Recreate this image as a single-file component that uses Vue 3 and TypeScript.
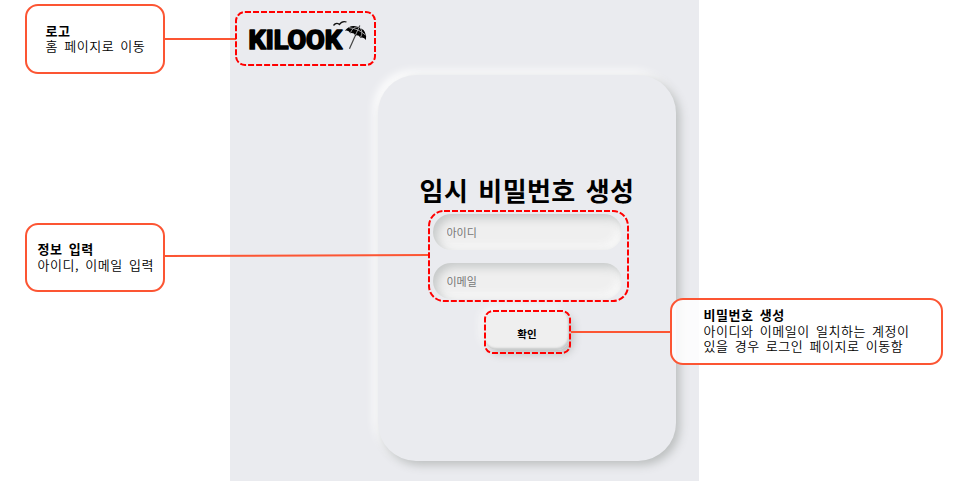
<script setup lang="ts">
interface Callout {
  name: string
  title: string
  lines: string[]
}

const callouts: Callout[] = [
  { name: 'home', title: '로고', lines: ['홈 페이지로 이동'] },
  { name: 'info', title: '정보 입력', lines: ['아이디, 이메일 입력'] },
  {
    name: 'create',
    title: '비밀번호 생성',
    lines: ['아이디와 이메일이 일치하는 계정이', '있을 경우 로그인 페이지로 이동함'],
  },
]
</script>

<template>
  <main class="board">
    <section class="screen">
      <header class="brand">
        <svg class="logo" width="120" height="34" viewBox="0 0 120 34">
          <text class="word" x="0.500" y="28.700" textLength="93.500" lengthAdjust="spacingAndGlyphs">KILOOK</text>
          <path class="bird" d="M85.500 5.500 Q88 2 91.500 4.500 Q94 0.500 98.500 2" />
          <g transform="translate(110 9.500) rotate(24)">
            <path class="pole" d="M0 -4.500 V21" />
            <path d="M-11.500 6.500 Q-9.500 -2.500 0 -2.500 Q9.500 -2.500 11.500 6.500 Q8.500 4 5.500 6.500 Q2.700 4.300 0 6.500 Q-2.700 4.300 -5.500 6.500 Q-8.500 4 -11.500 6.500Z" />
            <path class="rib" d="M-1 -2.500 Q-6 0 -5.500 6 M1 -2.500 Q6 0 5.500 6 M0 -2.500 V6 M-9 2 Q0 -1 9 2" />
          </g>
        </svg>
      </header>
      <form class="card" @submit.prevent>
        <h1>임시 비밀번호 생성</h1>
        <input type="text" placeholder="아이디" />
        <input type="text" placeholder="이메일" />
        <button type="submit">확인</button>
      </form>
    </section>

    <svg class="marks" width="968" height="481" viewBox="0 0 968 481">
      <path class="link" d="M164 39H236 M164 256L429 255 M571 332H671" />
      <rect class="dash" x="236" y="12" width="139" height="53" rx="9" />
      <rect class="dash" x="429" y="211" width="199" height="90" rx="15" />
      <rect class="dash" x="485" y="311" width="85" height="42" rx="8" />
    </svg>

    <aside v-for="c in callouts" :key="c.name" class="callout" :class="c.name">
      <strong>{{ c.title }}</strong>
      <span v-for="line in c.lines" :key="line">{{ line }}</span>
    </aside>
  </main>
</template>

<style>
body {
  background: #fff;
}
</style>

<style scoped>
.board {
  position: relative;
  width: 968px;
  height: 481px;
  overflow: hidden;
  font-family: "Noto Sans CJK KR", sans-serif;
  color: #000;
}
.screen {
  box-sizing: border-box;
  width: 469px;
  height: 481px;
  margin-left: 230px;
  padding-top: 20px;
  overflow: hidden;
  background: #eaebef;
}
.brand {
  height: 55px;
  padding-left: 18px;
}
.logo {
  display: block;
  overflow: visible;
}
.word {
  font: 700 25.5px Roboto, sans-serif;
  stroke: #000;
  stroke-width: 1.7;
  stroke-linejoin: round;
}
.bird {
  fill: none;
  stroke: #111;
  stroke-width: 1.3;
}
.pole {
  fill: none;
  stroke: #444;
  stroke-width: 1.2;
}
.rib {
  fill: none;
  stroke: #c5c6c9;
  stroke-width: 0.7;
}
.card {
  box-sizing: border-box;
  display: flex;
  flex-direction: column;
  align-items: center;
  width: 298px;
  height: 386px;
  margin-left: 148px;
  padding-top: 95px;
  border-radius: 38px;
  background: #eaebef;
  box-shadow: 4px 4px 10px #bcbfbf, -4px -4px 10px #fff;
}
h1 {
  margin: 0 0 4px;
  font-size: 26px;
  line-height: 40px;
  font-weight: 700;
  letter-spacing: 0.4px;
  word-spacing: 3.8px;
  white-space: nowrap;
}
input {
  box-sizing: border-box;
  width: 189px;
  height: 36px;
  margin: 0 0 13px;
  padding: 0 14px 1px;
  border: 0;
  border-radius: 18px;
  background: #efefef;
  box-shadow: inset 4px 4px 10px #c5c8c8, inset -4px -4px 10px #fafafa;
  font: 11px "Noto Sans CJK KR", sans-serif;
}
input::placeholder {
  color: #777;
}
button {
  width: 84px;
  height: 39px;
  margin-top: -1px;
  padding: 5px 0 0;
  border: 0;
  border-radius: 12px;
  background: #efefef;
  box-shadow: 4px 4px 8px #bcbfbf, -4px -4px 10px #fafafa, inset -1px -2px 2px #c8caca;
  font: 700 10.5px "Noto Sans CJK KR", sans-serif;
  color: #000;
}
.marks {
  position: absolute;
  inset: 0;
}
.link {
  fill: none;
  stroke: #fc5533;
  stroke-width: 2;
}
.dash {
  fill: none;
  stroke: #f00;
  stroke-width: 2;
  stroke-dasharray: 6 2;
}
.callout {
  position: absolute;
  box-sizing: border-box;
  display: flex;
  flex-direction: column;
  justify-content: center;
  padding-bottom: 2px;
  border: 2px solid #fc5533;
  border-radius: 13px;
  background: rgba(255, 255, 255, 0.86);
  font-size: 13px;
  line-height: 15.5px;
  font-weight: 350;
  letter-spacing: 0.55px;
  word-spacing: 2.7px;
  white-space: nowrap;
}
.callout strong {
  font-weight: 700;
}
.home {
  left: 25px;
  top: 4px;
  width: 140px;
  height: 70px;
  padding-left: 18.5px;
}
.info {
  left: 25px;
  top: 223px;
  width: 140px;
  height: 69px;
  padding-left: 10.5px;
}
.create {
  left: 670px;
  top: 298px;
  width: 273px;
  height: 67px;
  padding-left: 31.5px;
}
</style>
